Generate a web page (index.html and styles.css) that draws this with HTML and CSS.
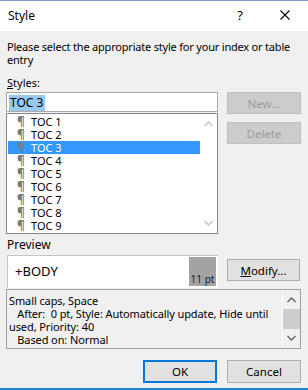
FILE: index.html
```html
<!DOCTYPE html>
<html lang="en">
<head>
  <meta charset="UTF-8" />
  <title>Style</title>
  <link rel="stylesheet" href="styles.css">
</head>
<body>
  <div class="window">

    <!-- Title bar -->
    <div class="titlebar">
      <span class="title">Style</span>
      <span class="help">?</span>
      <svg class="close" width="10" height="10" viewBox="0 0 10 10">
        <path d="M0.5 0.5 L9.5 9.5 M9.5 0.5 L0.5 9.5" stroke="#000" stroke-width="1.1" fill="none" />
      </svg>
    </div>

    <div class="content">
      <p class="prompt">Please select the appropriate style for your index or table entry</p>

      <div class="label"><u>S</u>tyles:</div>
      <div class="styles-row">
        <div class="styles-left">
          <div class="input"><span class="sel">TOC 3</span></div>
          <div class="list">
            <ul class="items">
              <li><span class="pil">¶</span>TOC 1</li>
              <li><span class="pil">¶</span>TOC 2</li>
              <li class="active"><span class="pil">¶</span>TOC 3</li>
              <li><span class="pil">¶</span>TOC 4</li>
              <li><span class="pil">¶</span>TOC 5</li>
              <li><span class="pil">¶</span>TOC 6</li>
              <li><span class="pil">¶</span>TOC 7</li>
              <li><span class="pil">¶</span>TOC 8</li>
              <li><span class="pil">¶</span>TOC 9</li>
            </ul>
            <div class="scrollbar">
              <svg width="9" height="6" viewBox="0 0 9 6"><path d="M0.5 5 L4.5 1 L8.5 5" stroke="#c2c2c2" stroke-width="1.4" fill="none" /></svg>
              <svg width="9" height="6" viewBox="0 0 9 6"><path d="M0.5 1 L4.5 5 L8.5 1" stroke="#c2c2c2" stroke-width="1.4" fill="none" /></svg>
            </div>
          </div>
        </div>
        <div class="side-buttons">
          <button class="btn disabled">New...</button>
          <button class="btn disabled">Delete</button>
        </div>
      </div>

      <div class="label preview-label">Preview</div>
      <div class="preview-row">
        <div class="preview">
          <span class="sample">+BODY</span>
          <div class="swatch">11 pt</div>
        </div>
        <button class="btn modify"><u>M</u>odify...</button>
      </div>

      <div class="desc">
        <div class="desc-text">
          Small caps, Space<br />
          &nbsp;&nbsp;&nbsp;After:&nbsp; 0 pt, Style: Automatically update, Hide until used, Priority: 40<br />
          &nbsp;&nbsp;&nbsp;Based on: Normal
        </div>
        <div class="desc-scroll">
          <svg width="9" height="6" viewBox="0 0 9 6"><path d="M0.5 5 L4.5 1 L8.5 5" stroke="#606060" stroke-width="1.3" fill="none" /></svg>
          <div class="thumb"></div>
          <svg width="9" height="6" viewBox="0 0 9 6"><path d="M0.5 1 L4.5 5 L8.5 1" stroke="#606060" stroke-width="1.3" fill="none" /></svg>
        </div>
      </div>

      <div class="footer">
        <button class="btn ok">OK</button>
        <button class="btn">Cancel</button>
      </div>
    </div>
  </div>
</body>
</html>
```

FILE: styles.css
```css
    body {
      margin: 0;
      font-family: 'Noto Sans', 'Open Sans', sans-serif;
      font-size: 11px;
      color: #000;
    }

    .window {
      width: 308px;
      height: 390px;
      box-sizing: border-box;
      background: #f0f0f0;
      border-top: 1px solid #7d9cc4;
      border-bottom: 2px solid #1c84d8;
      display: flex;
      flex-direction: column;
    }

    /* Title bar */
    .titlebar {
      height: 30px;
      background: #fff;
      display: flex;
      align-items: center;
      padding-left: 8px;
      flex-shrink: 0;
    }

    .title {
      flex: 1;
      font-size: 12px;
      margin-top: -2px;
    }

    .help {
      font-size: 13px;
      margin-right: 37px;
      margin-top: -2px;
    }

    .close {
      margin-right: 18px;
      margin-top: -2px;
    }

    .content {
      padding: 9px 7px 0 6px;
      line-height: 13px;
    }

    .prompt {
      margin: 0 0 10px 1px;
      letter-spacing: -0.2px;
    }

    .label {
      margin-left: 1px;
      height: 13px;
    }

    /* Styles list + buttons */
    .styles-row {
      display: flex;
      gap: 9px;
      margin-top: 3px;
    }

    .styles-left {
      width: 212px;
      display: flex;
      flex-direction: column;
      gap: 1px;
    }

    .input {
      height: 20px;
      box-sizing: border-box;
      border: 1px solid #a9a9a9;
      background: #fff;
      padding: 2px 0 0 2px;
      font-size: 12px;
    }

    .sel {
      background: #99c9ef;
      padding: 1px 2px 1px 1px;
      display: inline-block;
      line-height: 14px;
    }

    .list {
      height: 121px;
      box-sizing: border-box;
      border: 1px solid #828790;
      background: #fff;
      display: flex;
      padding: 1px 0 0 1px;
      font-size: 11px;
    }

    .items {
      list-style: none;
      margin: 0;
      padding: 0;
      flex: 1;
    }

    .items li {
      height: 13px;
      line-height: 13px;
      padding-left: 9px;
    }

    .items li.active {
      background: #3399ff;
      color: #fff;
    }

    .pil {
      color: #7a7a7a;
      display: inline-block;
      width: 14px;
      font-size: 12px;
      font-weight: bold;
    }

    .scrollbar {
      width: 17px;
      display: flex;
      flex-direction: column;
      justify-content: space-between;
      align-items: center;
      padding: 6px 0 7px;
    }

    .side-buttons {
      display: flex;
      flex-direction: column;
      gap: 8px;
    }

    .btn {
      width: 74px;
      height: 22px;
      box-sizing: border-box;
      background: #e1e1e1;
      border: 1px solid #adadad;
      font-family: 'Noto Sans', 'Open Sans', sans-serif;
      font-size: 11.5px;
      padding: 0;
      color: #000;
    }

    .btn.disabled {
      background: #cccccc;
      border-color: #bfbfbf;
      color: #9c9c9c;
    }

    .btn.ok {
      border: 2px solid #0078d7;
    }

    /* Preview */
    .preview-label {
      margin-top: 4px;
      font-size: 12px;
    }

    .preview-row {
      display: flex;
      align-items: flex-start;
      gap: 9px;
      margin-top: 4px;
      margin-left: 1px;
    }

    .preview {
      width: 211px;
      height: 33px;
      box-sizing: border-box;
      background: #fff;
      border-top: 1px solid #c4c4c4;
      border-left: 1px solid #c4c4c4;
      padding: 1px 2px 2px 0;
      display: flex;
    }

    .sample {
      flex: 1;
      font-size: 13px;
      padding: 8px 0 0 7px;
    }

    .swatch {
      width: 27px;
      background: #a3a3a3;
      font-size: 10px;
      line-height: 10px;
      display: flex;
      align-items: flex-end;
      justify-content: center;
      padding-bottom: 2px;
      box-sizing: border-box;
      color: #202020;
    }

    .modify {
      margin-top: 4px;
      width: 73px;
    }

    /* Description */
    .desc {
      margin-top: 1px;
      height: 60px;
      box-sizing: border-box;
      border: 1px solid #a0a0a0;
      display: flex;
    }

    .desc-text {
      flex: 1;
      padding: 4px 0 0 2px;
      letter-spacing: -0.1px;
    }

    .desc-scroll {
      width: 17px;
      border-left: 1px solid #fff;
      display: flex;
      flex-direction: column;
      align-items: center;
      padding-top: 7px;
    }

    .thumb {
      width: 17px;
      height: 20px;
      background: #cdcdcd;
      margin: 6px 0 6px;
    }

    /* Footer */
    .footer {
      display: flex;
      justify-content: flex-end;
      gap: 10px;
      margin-top: 11px;
    }

    .footer .btn {
      height: 23px;
    }
```
